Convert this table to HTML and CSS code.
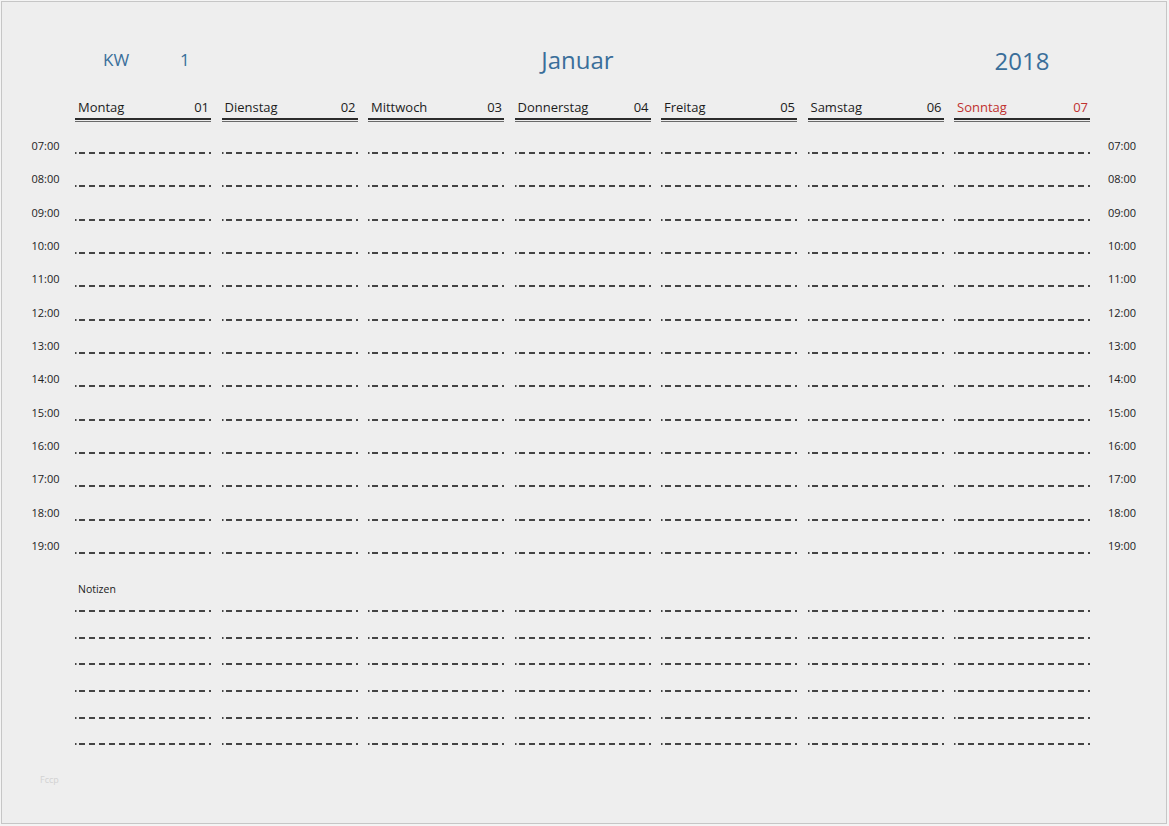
FILE: index.html
```html
<!DOCTYPE html>
<html lang="de">
<head>
<meta charset="utf-8">
<title>Wochenplaner KW 1 Januar 2018</title>
<link rel="stylesheet" href="styles.css">
</head>
<body>
<div class="page">
  <div class="grid title-row">
    <div class="kw"><span class="kw-label">KW</span><span class="kw-num">1</span></div>
    <div class="month">Januar</div>
    <div class="year">2018</div>
  </div>

  <div class="grid day-row">
    <div class="day"><span>Montag</span><span>01</span></div>
    <div class="day"><span>Dienstag</span><span>02</span></div>
    <div class="day"><span>Mittwoch</span><span>03</span></div>
    <div class="day"><span>Donnerstag</span><span>04</span></div>
    <div class="day"><span>Freitag</span><span>05</span></div>
    <div class="day"><span>Samstag</span><span>06</span></div>
    <div class="day sunday"><span>Sonntag</span><span>07</span></div>
  </div>

  <div class="times">
    <div class="grid row"><span class="t">07:00</span><i class="c"></i><i class="c"></i><i class="c"></i><i class="c"></i><i class="c"></i><i class="c"></i><i class="c"></i><span class="t r">07:00</span></div>
    <div class="grid row"><span class="t">08:00</span><i class="c"></i><i class="c"></i><i class="c"></i><i class="c"></i><i class="c"></i><i class="c"></i><i class="c"></i><span class="t r">08:00</span></div>
    <div class="grid row"><span class="t">09:00</span><i class="c"></i><i class="c"></i><i class="c"></i><i class="c"></i><i class="c"></i><i class="c"></i><i class="c"></i><span class="t r">09:00</span></div>
    <div class="grid row"><span class="t">10:00</span><i class="c"></i><i class="c"></i><i class="c"></i><i class="c"></i><i class="c"></i><i class="c"></i><i class="c"></i><span class="t r">10:00</span></div>
    <div class="grid row"><span class="t">11:00</span><i class="c"></i><i class="c"></i><i class="c"></i><i class="c"></i><i class="c"></i><i class="c"></i><i class="c"></i><span class="t r">11:00</span></div>
    <div class="grid row"><span class="t">12:00</span><i class="c"></i><i class="c"></i><i class="c"></i><i class="c"></i><i class="c"></i><i class="c"></i><i class="c"></i><span class="t r">12:00</span></div>
    <div class="grid row"><span class="t">13:00</span><i class="c"></i><i class="c"></i><i class="c"></i><i class="c"></i><i class="c"></i><i class="c"></i><i class="c"></i><span class="t r">13:00</span></div>
    <div class="grid row"><span class="t">14:00</span><i class="c"></i><i class="c"></i><i class="c"></i><i class="c"></i><i class="c"></i><i class="c"></i><i class="c"></i><span class="t r">14:00</span></div>
    <div class="grid row"><span class="t">15:00</span><i class="c"></i><i class="c"></i><i class="c"></i><i class="c"></i><i class="c"></i><i class="c"></i><i class="c"></i><span class="t r">15:00</span></div>
    <div class="grid row"><span class="t">16:00</span><i class="c"></i><i class="c"></i><i class="c"></i><i class="c"></i><i class="c"></i><i class="c"></i><i class="c"></i><span class="t r">16:00</span></div>
    <div class="grid row"><span class="t">17:00</span><i class="c"></i><i class="c"></i><i class="c"></i><i class="c"></i><i class="c"></i><i class="c"></i><i class="c"></i><span class="t r">17:00</span></div>
    <div class="grid row"><span class="t">18:00</span><i class="c"></i><i class="c"></i><i class="c"></i><i class="c"></i><i class="c"></i><i class="c"></i><i class="c"></i><span class="t r">18:00</span></div>
    <div class="grid row"><span class="t">19:00</span><i class="c"></i><i class="c"></i><i class="c"></i><i class="c"></i><i class="c"></i><i class="c"></i><i class="c"></i><span class="t r">19:00</span></div>
  </div>

  <div class="grid notes-head"><span class="notes-label">Notizen</span></div>
  <div class="notes">
    <div class="grid nrow"><i class="c"></i><i class="c"></i><i class="c"></i><i class="c"></i><i class="c"></i><i class="c"></i><i class="c"></i></div>
    <div class="grid nrow"><i class="c"></i><i class="c"></i><i class="c"></i><i class="c"></i><i class="c"></i><i class="c"></i><i class="c"></i></div>
    <div class="grid nrow"><i class="c"></i><i class="c"></i><i class="c"></i><i class="c"></i><i class="c"></i><i class="c"></i><i class="c"></i></div>
    <div class="grid nrow"><i class="c"></i><i class="c"></i><i class="c"></i><i class="c"></i><i class="c"></i><i class="c"></i><i class="c"></i></div>
    <div class="grid nrow"><i class="c"></i><i class="c"></i><i class="c"></i><i class="c"></i><i class="c"></i><i class="c"></i><i class="c"></i></div>
    <div class="grid nrow"><i class="c"></i><i class="c"></i><i class="c"></i><i class="c"></i><i class="c"></i><i class="c"></i><i class="c"></i></div>
  </div>

  <div class="footer">Fccp</div>
</div>
</body>
</html>
```

FILE: styles.css
```css
html, body {
  margin: 0;
  padding: 0;
  background: #f4f4f4;
}

body {
  font-family: "Open Sans", "Noto Sans", "DejaVu Sans", sans-serif;
  color: #1c1c1c;
}

.page {
  box-sizing: border-box;
  margin: 1px;
  width: 1166px;
  height: 823px;
  border: 1px solid #c6c6c6;
  background: #eeeeee;
  overflow: hidden;
}

.grid {
  display: grid;
  grid-template-columns: 62.5px repeat(7, 136px) 1fr;
  column-gap: 10.5px;
}

/* Title row */
.title-row {
  padding-top: 42px;
  height: 34px;
  align-items: center;
  color: #3a6e9a;
}

.kw {
  grid-column: 2;
  display: flex;
  align-items: center;
  padding-left: 28px;
  font-size: 17px;
  line-height: 34px;
  margin-top: -2px;
}

.kw-num {
  margin-left: 51px;
}

.month {
  grid-column: 5;
  text-align: center;
  padding-right: 10px;
  font-size: 24px;
  line-height: 34px;
  margin-top: -2px;
}

.year {
  grid-column: 8;
  text-align: center;
  font-size: 24px;
  line-height: 34px;
}

/* Day header row */
.day-row {
  margin-top: 20px;
}

.day-row .day:first-child {
  grid-column: 2;
}

.day {
  display: flex;
  justify-content: space-between;
  padding: 0 2px 2px 3px;
  font-size: 13px;
  line-height: 18px;
  border-bottom: 2px solid #2b2b2b;
  box-shadow: 0 1px 0 #eeeeee, 0 2px 0 #6a6a6a;
}

.sunday {
  color: #c0312f;
}

/* Time rows */
.times {
  margin-top: 16px;
}

.row {
  height: 33.333px;
}

.t {
  font-size: 11px;
  line-height: 20px;
  text-align: right;
  padding-right: 5px;
  color: #222;
}

.t.r {
  text-align: left;
  padding-left: 7.5px;
  padding-right: 0;
}

.c {
  display: block;
  --y: 16px;
  background:
    linear-gradient(#444, #444) 0 var(--y) / 1.5px 2px no-repeat,
    repeating-linear-gradient(90deg, transparent 0 4px, #444 4px 10px) 0 var(--y) / 100% 2px no-repeat;
}

/* Notes */
.notes-head {
  margin-top: 12.7px;
}

.notes-label {
  grid-column: 2;
  font-size: 10.5px;
  line-height: 14px;
  padding-left: 3px;
  color: #222;
}

.notes {
  margin-top: 14px;
}

.nrow {
  height: 26.667px;
}

.nrow .c:first-child {
  grid-column: 2;
}

.nrow .c {
  --y: 0px;
}

/* Footer */
.footer {
  margin-top: 4px;
  padding-left: 38px;
  font-size: 9px;
  line-height: 12px;
  color: #d2d2d2;
}
```
